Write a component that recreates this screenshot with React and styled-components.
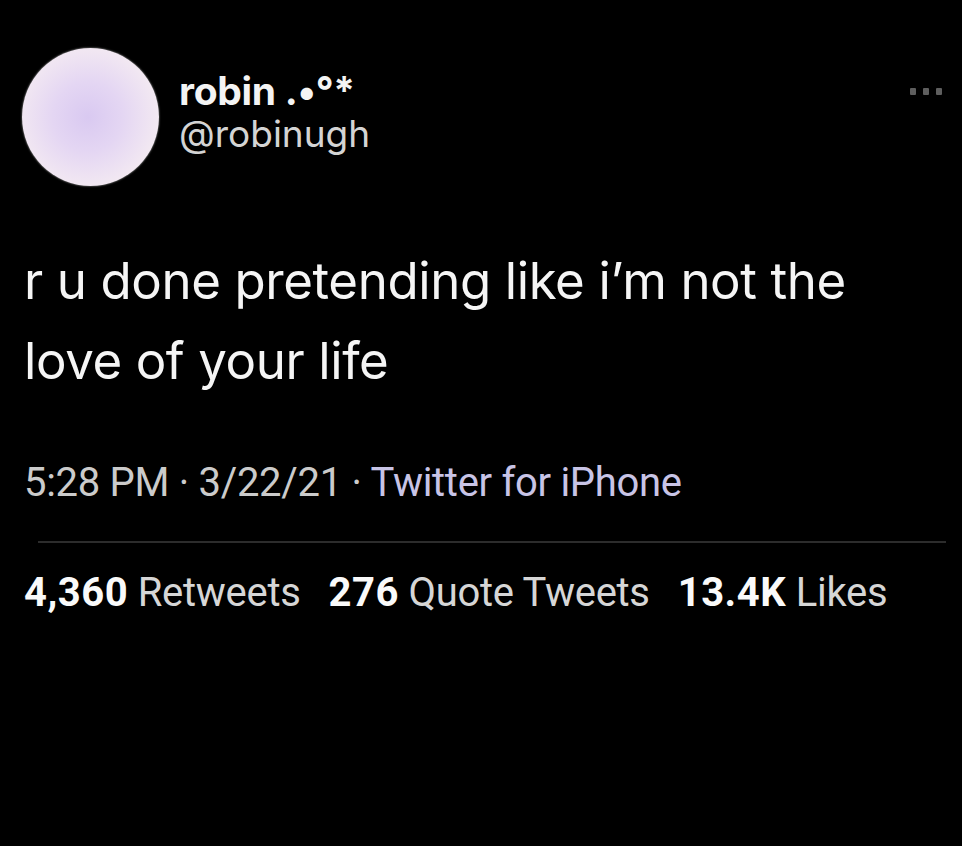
import React from "react";
import styled, { createGlobalStyle } from "styled-components";

const Global = createGlobalStyle`
  html, body { margin: 0; padding: 0; background: #000; }
  body { font-family: Inter, "Noto Sans", sans-serif; }
`;

const Page = styled.div`
  width: 962px;
  height: 846px;
  background: #000;
  padding: 48px 0 0 0;
  box-sizing: border-box;
  position: relative;
  overflow: hidden;
`;

const Header = styled.div`
  display: flex;
  align-items: flex-start;
  gap: 20px;
  padding-left: 22px;
`;

const Avatar = styled.div`
  width: 137px;
  height: 138px;
  border-radius: 50%;
  background: radial-gradient(circle at 48% 50%, #d9c9f1 0%, #e4d6f3 35%, #f2e8f2 70%, #fdf7f8 100%);
  box-shadow: 0 0 2px rgba(255, 255, 255, 0.7);
  flex-shrink: 0;
`;

const Names = styled.div`
  display: flex;
  flex-direction: column;
  margin-top: 21px;
`;

const DisplayName = styled.div`
  font-family: Inter, sans-serif;
  font-weight: 700;
  font-size: 39px;
  line-height: 43px;
  color: #f4f4f4;
  letter-spacing: -0.3px;
`;

const Handle = styled.div`
  font-family: Inter, sans-serif;
  font-weight: 400;
  font-size: 37px;
  line-height: 43px;
  color: #d4d4d4;
`;

const More = styled.div`
  position: absolute;
  top: 88px;
  right: 20px;
  display: flex;
  gap: 7px;
`;

const Dot = styled.span`
  width: 6px;
  height: 7px;
  border-radius: 1px;
  background: #5e5e5e;
  filter: blur(0.5px);
`;

const Body = styled.div`
  padding: 0 0 0 24px;
  margin-top: 55px;
  font-family: Inter, sans-serif;
  font-size: 51px;
  line-height: 80px;
  color: #f5f5f5;
  font-weight: 400;
  letter-spacing: -0.4px;
`;

const Meta = styled.div`
  margin-top: 59px;
  padding-left: 24px;
  font-family: Roboto, sans-serif;
  font-size: 40px;
  line-height: 46px;
  color: #cbcbcb;
  letter-spacing: -0.3px;
`;

const Source = styled.span`
  color: #c8c4e6;
`;

const Divider = styled.div`
  margin: 35px 16px 0 38px;
  height: 2px;
  background: #2c2c2c;
`;

const Stats = styled.div`
  margin-top: 27px;
  padding-left: 24px;
  display: flex;
  gap: 28px;
  font-family: Roboto, sans-serif;
  font-size: 40px;
  line-height: 46px;
  color: #d6d6d6;
  letter-spacing: -0.3px;
`;

const Stat = styled.span``;

const Num = styled.b`
  color: #fafafa;
  font-weight: 700;
  letter-spacing: 0.5px;
`;

export default function App() {
  return (
    <>
      <Global />
      <Page>
        <Header>
          <Avatar />
          <Names>
            <DisplayName>robin .•°*</DisplayName>
            <Handle>@robinugh</Handle>
          </Names>
        </Header>
        <More>
          <Dot />
          <Dot />
          <Dot />
        </More>
        <Body>
          r u done pretending like i’m not the
          <br />
          love of your life
        </Body>
        <Meta>
          5:28 PM · 3/22/21 · <Source>Twitter for iPhone</Source>
        </Meta>
        <Divider />
        <Stats>
          <Stat>
            <Num>4,360</Num> Retweets
          </Stat>
          <Stat>
            <Num>276</Num> Quote Tweets
          </Stat>
          <Stat>
            <Num>13.4K</Num> Likes
          </Stat>
        </Stats>
      </Page>
    </>
  );
}
